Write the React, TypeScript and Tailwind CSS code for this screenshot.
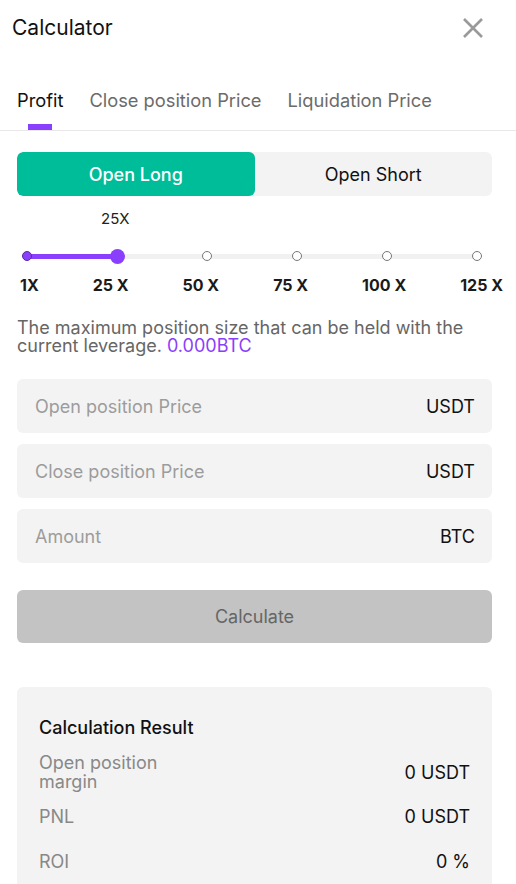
import { useState } from 'react'

const tabs = ['Profit', 'Close position Price', 'Liquidation Price']
const marks = ['1X', '25 X', '50 X', '75 X', '100 X', '125 X']

const inputs = [
  { placeholder: 'Open position Price', unit: 'USDT' },
  { placeholder: 'Close position Price', unit: 'USDT' },
  { placeholder: 'Amount', unit: 'BTC' },
]

export default function App() {
  const [tab, setTab] = useState(0)
  const [side, setSide] = useState<'long' | 'short'>('long')

  return (
    <div className="w-[516px] h-[884px] overflow-hidden bg-white font-['Inter','Noto_Sans',sans-serif] text-[#111]">
      {/* header */}
      <div className="h-[56px] flex items-center justify-between pl-[12px] pr-[31px]">
        <h1 className="text-[21px] leading-[24px] font-normal">Calculator</h1>
        <button className="w-[24px] h-[24px] flex items-center justify-center">
          <svg width="22" height="22" viewBox="0 0 22 22">
            <path d="M2 2 L20 20 M20 2 L2 20" stroke="#9a9a9a" strokeWidth="2.6" strokeLinecap="butt" />
          </svg>
        </button>
      </div>

      {/* tabs */}
      <div className="flex gap-[26px] pl-[17px] pt-[32px] border-b border-[#e8e8e8]">
        {tabs.map((t, i) => (
          <button key={t} onClick={() => setTab(i)} className="flex flex-col items-center">
            <span className={`text-[18.3px] leading-[24px] ${tab === i ? 'text-[#111]' : 'text-[#6b6b6b]'}`}>{t}</span>
            <span className={`mt-[12px] h-[6px] w-[24px] ${tab === i ? 'bg-[#8A3FFC]' : 'bg-transparent'}`} />
          </button>
        ))}
      </div>

      {/* long / short */}
      <div className="ml-[17px] mr-[24px] mt-[21px] h-[44px] flex rounded-[6px] bg-[#f3f3f3] overflow-hidden">
        <button
          onClick={() => setSide('long')}
          className={`flex-1 rounded-[6px] text-[18px] ${side === 'long' ? 'bg-[#00BD9A] text-white font-medium' : 'text-[#111]'}`}
        >
          Open Long
        </button>
        <button
          onClick={() => setSide('short')}
          className={`flex-1 rounded-[6px] text-[18px] ${side === 'short' ? 'bg-[#F0455A] text-white font-medium' : 'text-[#111]'}`}
        >
          Open Short
        </button>
      </div>

      {/* leverage */}
      <div className="mt-[13px] pl-[101px] text-[15px] leading-[20px] text-[#222]">25X</div>
      <div className="relative mt-[17px] ml-[22px] w-[460px] h-[20px]">
        <div className="absolute left-[5px] right-[5px] top-[8px] h-[5px] bg-[#f1f1f1]" />
        <div className="absolute left-[5px] top-[8px] h-[5px] w-[89px] bg-[#8A3FFC]" />
        <div className="relative h-full flex items-center justify-between">
          {marks.map((m, i) => (
            <div key={m} className="w-[10px] h-[10px] flex items-center justify-center">
              {i === 0 && <div className="w-[10px] h-[10px] rounded-full bg-[#8A3FFC] border border-[#5a2aa0]" />}
              {i === 1 && <div className="w-[15px] h-[15px] shrink-0 rounded-full bg-[#8A3FFC]" />}
              {i > 1 && <div className="w-[10px] h-[10px] rounded-full bg-white border border-[#777]" />}
            </div>
          ))}
        </div>
      </div>
      <div className="mt-[9px] flex justify-between pl-[20px] pr-[13px]">
        {marks.map((m) => (
          <span key={m} className="text-[16px] leading-[20px] font-bold text-[#1a1a1a]">{m}</span>
        ))}
      </div>

      <p className="mt-[24px] pl-[17px] pr-[24px] text-[18px] leading-[18px] text-[#666]">
        The maximum position size that can be held with the current leverage.{' '}
        <span className="text-[#8A3FFC]">0.000BTC</span>
      </p>

      {/* inputs */}
      <div className="mt-[24px] ml-[17px] mr-[24px] flex flex-col gap-[11px]">
        {inputs.map((f) => (
          <div key={f.placeholder} className="h-[54px] flex items-center justify-between rounded-[6px] bg-[#f3f3f3] pl-[18px] pr-[17px]">
            <input
              placeholder={f.placeholder}
              className="flex-1 bg-transparent outline-none text-[18px] placeholder:text-[#9c9c9c]"
            />
            <span className="text-[18px]">{f.unit}</span>
          </div>
        ))}
      </div>

      <button className="mt-[27px] ml-[17px] w-[475px] h-[53px] rounded-[6px] bg-[#c3c3c3] text-[18px] text-[#666]">
        Calculate
      </button>

      {/* result */}
      <div className="mt-[44px] ml-[17px] mr-[24px] rounded-[6px] bg-[#f3f3f3] px-[22px] pt-[29px] pb-[20px]">
        <div className="text-[18px] leading-[24px] font-medium">Calculation Result</div>
        <div className="mt-[13px] flex items-center justify-between">
          <span className="w-[135px] text-[18px] leading-[19px] text-[#888]">Open position margin</span>
          <span className="text-[18px]">0 USDT</span>
        </div>
        <div className="mt-[13px] flex items-center justify-between h-[24px]">
          <span className="text-[18px] text-[#888]">PNL</span>
          <span className="text-[18px]">0 USDT</span>
        </div>
        <div className="mt-[21px] flex items-center justify-between h-[24px]">
          <span className="text-[18px] text-[#888]">ROI</span>
          <span className="text-[18px]">0 %</span>
        </div>
      </div>
    </div>
  )
}
